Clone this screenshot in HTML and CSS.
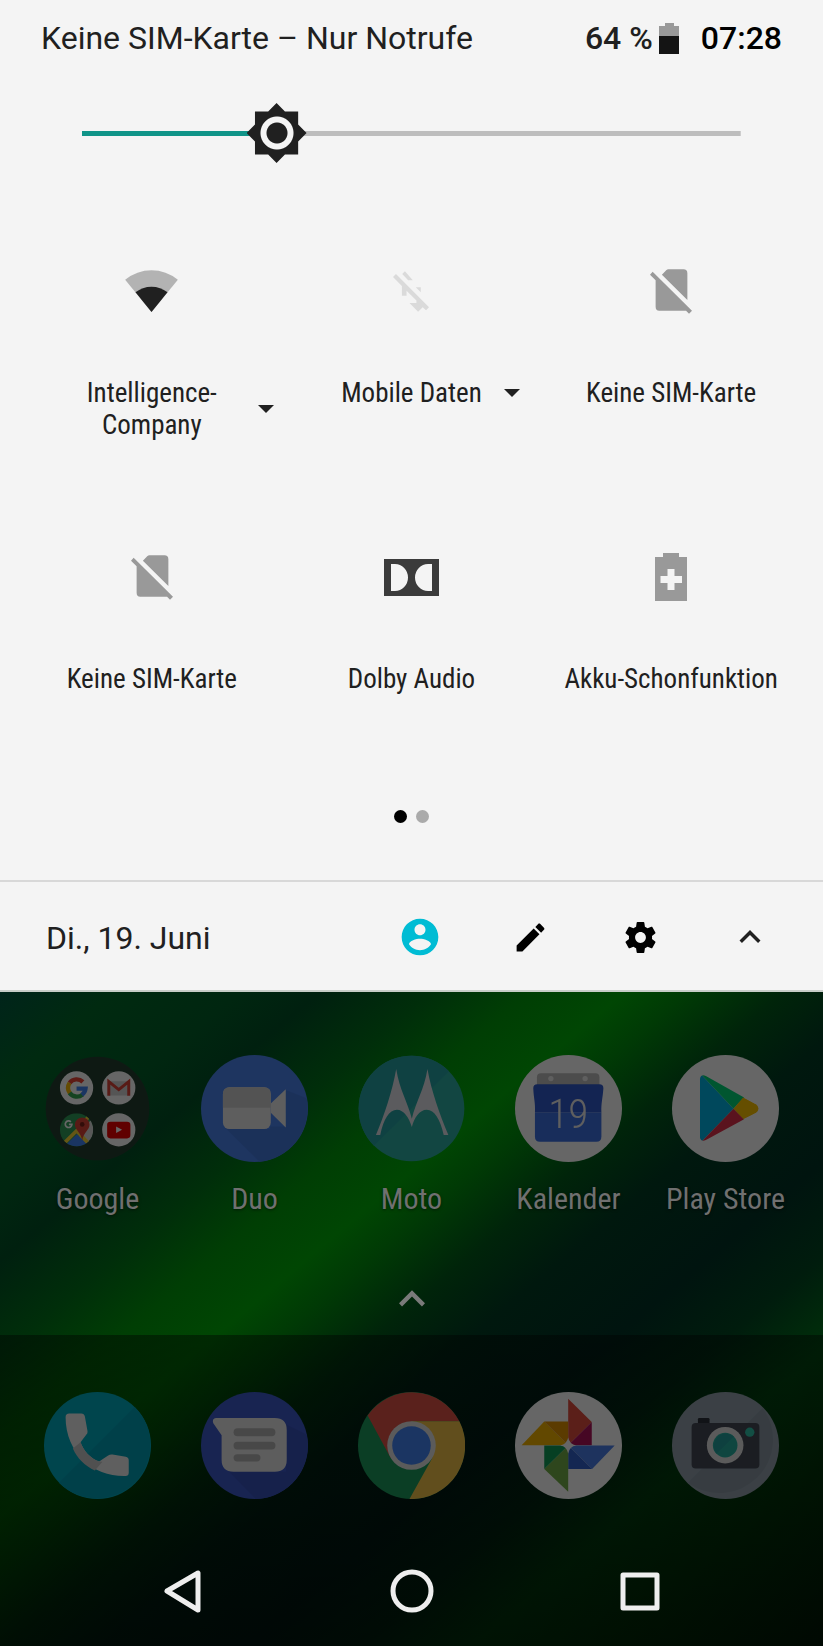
FILE: index.html
```html
<!DOCTYPE html>
<html lang="de">
<head>
  <meta charset="UTF-8">
  <meta name="viewport" content="width=device-width, initial-scale=1.0">
  <title>Schnelleinstellungen</title>
  <link rel="stylesheet" href="styles.css">
</head>
<body>

  <section class="panel">
    <header class="status">
      <span class="carrier">Keine SIM-Karte – Nur Notrufe</span>
      <span class="percent">64 %</span>
      <svg class="battery" viewBox="0 0 20 31"><path fill="#999" d="M6 0h9v3h5v10H0V3h6z"/><path fill="#141414" d="M0 13h20v18H0z"/></svg>
      <span class="clock">07:28</span>
    </header>

    <div class="brightness">
      <input type="range" min="0" max="255" value="70" aria-label="Helligkeit">
    </div>

    <div class="tiles">
      <button class="tile">
        <span class="tile-icon">
          <svg width="53" height="42" viewBox="0 0 158 126"><path fill="#b3b3b3" d="M79 126 0 29A125 125 0 0 1 158 29Z"/><path fill="#202020" d="M79 126 31 67A77 77 0 0 1 127 67Z"/></svg>
        </span>
        <span class="tile-label with-arrow"><span>Intelligence-Company</span><i class="arrow"></i></span>
      </button>
      <button class="tile">
        <span class="tile-icon">
          <svg width="36" height="41" viewBox="0 0 109 122"><path fill="#dadada" d="M9 8 0 17 27 44V74H41V59L71 88V96H50L76 122 90 109 100 118 109 109ZM36 0 28 8 46 27H60ZM69 48H84V63Z"/></svg>
        </span>
        <span class="tile-label with-arrow"><span>Mobile Daten</span><i class="arrow"></i></span>
      </button>
      <button class="tile">
        <span class="tile-icon">
          <svg width="42" height="45" viewBox="0 0 127 134"><path fill="#999" d="M8 7 0 16 17 33V113Q17 125 28 125H109L118 134 127 125ZM36 16 49 3Q52 0 56 0H101Q113 0 113 12V93Z"/></svg>
        </span>
        <span class="tile-label">Keine SIM-Karte</span>
      </button>
      <button class="tile">
        <span class="tile-icon">
          <svg width="42" height="45" viewBox="0 0 127 134"><path fill="#999" d="M8 7 0 16 17 33V113Q17 125 28 125H109L118 134 127 125ZM36 16 49 3Q52 0 56 0H101Q113 0 113 12V93Z"/></svg>
        </span>
        <span class="tile-label">Keine SIM-Karte</span>
      </button>
      <button class="tile">
        <span class="tile-icon">
          <svg width="55" height="37" viewBox="0 0 55 37"><path fill="#3b3b3b" d="M0 0h55v37H0z"/><path fill="#f4f4f4" d="M7 5h4a13 13.500 0 0 1 0 27H7zM48 5h-4a13 13.500 0 0 0 0 27h4z"/></svg>
        </span>
        <span class="tile-label">Dolby Audio</span>
      </button>
      <button class="tile">
        <span class="tile-icon">
          <svg width="32" height="48" viewBox="0 0 32 48"><path fill="#999" d="M8 0h16v4h8v44H0V4h8z"/><path fill="#f4f4f4" d="M12.500 16h7v7H27v7h-7.500v7h-7v-7H5.500v-7h7z"/></svg>
        </span>
        <span class="tile-label">Akku-Schonfunktion</span>
      </button>
    </div>

    <div class="pages"><i class="dot active"></i><i class="dot"></i></div>

    <footer class="panel-footer">
      <span class="date">Di., 19. Juni</span>
      <button aria-label="Nutzer"><svg width="44" height="44" viewBox="0 0 24 24"><path fill="#00bcd4" d="M12 2C6.480 2 2 6.480 2 12s4.480 10 10 10 10-4.480 10-10S17.520 2 12 2zm0 3c1.660 0 3 1.340 3 3s-1.340 3-3 3-3-1.340-3-3 1.340-3 3-3zm0 14.200c-2.500 0-4.710-1.280-6-3.220.030-1.990 4-3.080 6-3.080 1.990 0 5.970 1.090 6 3.080-1.290 1.940-3.500 3.220-6 3.220z"/></svg></button>
      <button aria-label="Bearbeiten"><svg width="37" height="37" viewBox="0 0 24 24"><path d="M3 17.250V21h3.750L17.810 9.940l-3.750-3.750L3 17.250zM20.710 7.040c.390-.390.390-1.020 0-1.410l-2.340-2.340c-.390-.390-1.020-.390-1.410 0l-1.830 1.830 3.750 3.750 1.830-1.830z"/></svg></button>
      <button aria-label="Einstellungen"><svg width="37" height="37" viewBox="0 0 24 24"><path d="M19.430 12.980c.040-.320.070-.640.070-.980s-.030-.660-.070-.980l2.110-1.650c.190-.150.240-.420.120-.640l-2-3.460c-.120-.220-.390-.300-.610-.220l-2.490 1c-.520-.400-1.080-.730-1.690-.980l-.380-2.650C14.460 2.180 14.250 2 14 2h-4c-.250 0-.460.180-.490.420l-.380 2.650c-.610.250-1.170.590-1.690.980l-2.490-1c-.230-.090-.490 0-.610.220l-2 3.460c-.130.220-.070.490.120.640l2.110 1.650c-.040.320-.070.650-.070.980s.030.660.070.980l-2.110 1.650c-.190.150-.240.420-.120.640l2 3.460c.120.220.390.300.610.220l2.490-1c.520.400 1.080.730 1.690.980l.380 2.650c.030.240.240.420.490.420h4c.250 0 .460-.180.490-.420l.380-2.650c.610-.250 1.170-.590 1.690-.980l2.490 1c.230.090.490 0 .610-.220l2-3.460c.120-.220.070-.490-.120-.640l-2.110-1.650zM12 15.500c-1.930 0-3.500-1.570-3.500-3.500s1.570-3.500 3.500-3.500 3.500 1.570 3.500 3.500-1.570 3.500-3.500 3.500z"/></svg></button>
      <button aria-label="Einklappen"><svg width="42" height="42" viewBox="0 0 24 24"><path fill="#202020" d="M12 8l-6 6 1.410 1.410L12 10.830l4.590 4.580L18 14z"/></svg></button>
    </footer>
  </section>

  <main class="home">
    <div class="apps">
      <a href="#" class="app">
        <svg viewBox="0 0 322 322">
          <circle cx="161" cy="161" r="156" fill="#243f30"/>
          <circle cx="98" cy="99" r="50" fill="#fff"/>
          <g fill="none" stroke-width="13">
            <path stroke="#ea4335" d="M77 84A27 27 0 0 1 117 81"/>
            <path stroke="#fbbc05" d="M78 115A27 27 0 0 1 77 84"/>
            <path stroke="#34a853" d="M116 119A27 27 0 0 1 77 114"/>
            <path stroke="#4285f4" d="M98 101H125A27 27 0 0 1 114 120"/>
          </g>
          <circle cx="225" cy="99" r="50" fill="#fff"/>
          <path fill="#d5d5d5" d="M196 79H254V122H196z"/>
          <path fill="none" stroke="#db4437" stroke-width="9" d="M195 123V80L225 104 255 80V123"/>
          <clipPath id="maps"><circle cx="98" cy="225" r="50"/></clipPath>
          <g clip-path="url(#maps)">
            <path fill="#2f9e5a" d="M48 175H148V275H48z"/>
            <path fill="#4285f4" d="M60 275 100 238 138 275z"/>
            <path fill="#ddd" d="M106 228 148 190V275H138L106 244z"/>
            <path stroke="#fdd835" stroke-width="11" fill="none" d="M54 272 98 228 138 270M118 208 140 176"/>
            <path fill="none" stroke="#fff" stroke-width="5" d="M81 201A10 10 0 1 0 84 209H75"/>
            <path fill="#db4437" d="M115 257C111 233 93 225 93 210A22 22 0 0 1 137 210C137 225 119 233 115 257Z"/>
            <circle cx="115" cy="209" r="7" fill="#7b2119"/>
          </g>
          <circle cx="225" cy="225" r="50" fill="#fff"/>
          <rect x="190" y="201" width="70" height="50" rx="10" fill="#f00000"/>
          <path fill="#fff" d="M217 215V235L235 225z"/>
        </svg>
        <span>Google</span>
      </a>
      <a href="#" class="app">
        <svg viewBox="0 0 322 322">
          <circle cx="161" cy="161" r="161" fill="#4a84f0"/>
          <path fill="#447adf" d="M72 218 176 321A161 161 0 0 0 318 130L255 105V215H208V223z"/>
          <path fill="#ececec" d="M210 146 255 103V218L210 174z"/>
          <rect x="66" y="97" width="144" height="126" rx="20" fill="#ececec"/>
          <path fill="#d0d0d0" d="M66 159V117Q66 97 86 97H190Q210 97 210 117V159z"/>
        </svg>
        <span>Duo</span>
      </a>
      <a href="#" class="app">
        <svg viewBox="0 0 322 322">
          <circle cx="161" cy="161" r="159" fill="#2cb0a4"/>
          <path fill="#26a3a5" d="M48 273A159 159 0 0 1 274 49z"/>
          <path fill="#e4e4ea" d="M54 241C80 178 103 110 115 42 125 105 149 140 162 192 174 140 199 105 209 42 221 110 246 178 272 241L258 241C247 193 230 165 207 165 185 165 169 190 162 217 154 190 138 165 117 165 94 165 77 193 67 241Z"/>
        </svg>
        <span>Moto</span>
      </a>
      <a href="#" class="app">
        <svg viewBox="0 0 322 322">
          <circle cx="161" cy="161" r="161" fill="#fff"/>
          <rect x="66" y="55" width="188" height="50" rx="12" fill="#bdbdbd"/>
          <circle cx="108" cy="71" r="8" fill="#eee"/><circle cx="211" cy="71" r="8" fill="#eee"/>
          <path fill="#3c70e4" d="M60 172H260V245Q260 261 245 261H75Q60 261 60 245z"/>
          <path fill="#3059cc" d="M55 100Q55 88 67 88H254Q266 88 266 100C264 130 259 145 260 172H60C62 145 56 130 55 100z"/>
          <text class="day" x="160" y="219" text-anchor="middle">19</text>
        </svg>
        <span>Kalender</span>
      </a>
      <a href="#" class="app">
        <svg viewBox="0 0 322 322">
          <circle cx="161" cy="161" r="161" fill="#fff"/>
          <clipPath id="play"><path d="M84 73Q86 56 102 63L253 148Q268 161 253 174L102 256Q86 263 84 247Z"/></clipPath>
          <g clip-path="url(#play)">
            <path fill="#00b4e6" d="M80 50V270L185 162z"/>
            <path fill="#00d878" d="M80 50 220 124 185 162z"/>
            <path fill="#fcc400" d="M214 128 280 162 214 193 185 162z"/>
            <path fill="#e0304a" d="M80 270 185 162 220 198z"/>
          </g>
        </svg>
        <span>Play Store</span>
      </a>
    </div>

    <div class="drawer"><svg width="52" height="52" viewBox="0 0 24 24"><path fill="#7a7a7a" d="M12 8l-6 6 1.410 1.410L12 10.830l4.590 4.580L18 14z"/></svg></div>

    <div class="dock">
      <div class="apps">
        <a href="#" class="app" aria-label="Telefon">
          <svg viewBox="0 0 322 322">
            <circle cx="161" cy="161" r="161" fill="#00acc1"/>
            <path fill="#00a1b6" d="M45 273 273 45A161 161 0 0 1 45 273z"/>
            <path fill="#eee" d="M65 76Q65 65 76 65H112Q121 65 123 74L131 118Q132 124 127 129L110 151C118 175 140 201 166 209L193 191Q199 187 206 188L246 195Q255 197 255 206V243Q255 253 245 253C150 255 65 185 65 76Z"/>
            <path fill="#c8c8c8" d="M87 170 110 151C118 175 140 201 166 209L176 210 153 236C124 223 100 200 87 170z"/>
          </svg>
        </a>
        <a href="#" class="app" aria-label="Nachrichten">
          <svg viewBox="0 0 322 322">
            <circle cx="161" cy="161" r="161" fill="#3c59ca"/>
            <path fill="#3752bc" d="M75 230 165 322A161 161 0 0 0 318 128L256 98V240z"/>
            <path fill="#e8e8e8" d="M46 78H222Q258 78 258 114V204Q258 240 222 240H98Q62 240 62 204V130L37 94Q32 79 46 78Z"/>
            <g fill="#b4b4b4"><rect x="98" y="109" width="126" height="24" rx="12"/><rect x="98" y="150" width="126" height="23" rx="11"/><rect x="98" y="187" width="81" height="22" rx="11"/></g>
          </svg>
        </a>
        <a href="#" class="app" aria-label="Chrome">
          <svg viewBox="0 0 322 322">
            <circle cx="161" cy="161" r="161" fill="#1b9c5c"/>
            <path fill="#e05247" d="M29 71A161 161 0 0 1 305 88H161V161L98 198z"/>
            <path fill="#f3c448" d="M305 88A161 161 0 0 1 155 322L224 198 161 161V88z"/>
            <circle cx="161" cy="161" r="73" fill="#e4e4e4"/><circle cx="161" cy="161" r="58" fill="#4485f4"/>
          </svg>
        </a>
        <a href="#" class="app" aria-label="Fotos">
          <svg viewBox="0 0 322 322">
            <circle cx="161" cy="161" r="161" fill="#fff"/>
            <path fill="#e34d3f" d="M160 20 231 90 160 160z"/><path fill="#b0125a" d="M231 90V160H160z"/>
            <path fill="#f4b400" d="M20 160 88 89 160 160z"/><path fill="#e39300" d="M88 89H160V160z"/>
            <path fill="#4a80ea" d="M300 161 232 232 160 161z"/><path fill="#3262cc" d="M160 161 232 232H160z"/>
            <path fill="#72b048" d="M160 300 88 232 160 161z"/><path fill="#0f9d58" d="M88 161H160L88 232z"/>
            <path fill="#fff" d="M160 137Q164 157 184 161 164 164 160 185 156 164 136 161 156 157 160 137z"/>
          </svg>
        </a>
        <a href="#" class="app" aria-label="Kamera">
          <svg viewBox="0 0 322 322">
            <circle cx="161" cy="161" r="161" fill="#93a1ad"/>
            <path fill="#8997a3" d="M48 273 273 48A161 161 0 0 1 48 273z"/>
            <rect x="78" y="78" width="35" height="24" rx="4" fill="#2b3039"/>
            <rect x="59" y="93" width="204" height="137" rx="12" fill="#434956"/>
            <circle cx="160" cy="160" r="55" fill="#e4e4e4"/><circle cx="160" cy="160" r="37" fill="#26b0a0"/>
            <path fill="#229f9d" d="M134 186A37 37 0 0 1 186 134z"/>
            <circle cx="234" cy="121" r="14" fill="#2fc4aa"/>
          </svg>
        </a>
      </div>

      <nav class="nav">
        <button aria-label="Zurück"><svg width="44" height="44" viewBox="0 0 44 44"><path d="M36 4V41L5 22z"/></svg></button>
        <button aria-label="Startbildschirm"><svg width="44" height="44" viewBox="0 0 44 44"><circle cx="22" cy="22" r="19"/></svg></button>
        <button aria-label="Übersicht"><svg width="44" height="44" viewBox="0 0 44 44"><path d="M5 6H39V39H5z"/></svg></button>
      </nav>
    </div>
  </main>

</body>
</html>
```
FILE: styles.css
```css
* {
  box-sizing: border-box;
}
body {
  margin: 0;
  min-height: 100vh;
  display: flex;
  flex-direction: column;
  font-family: Roboto, sans-serif;
  color: #202020;
  background: #000;
}
button {
  border: 0;
  padding: 0;
  background: none;
  color: inherit;
  font: inherit;
}
svg {
  display: block;
}

/* quick settings panel */
.panel {
  background: #f4f4f4;
  border-bottom: 2px solid #c8cdc8;
}
.status {
  display: flex;
  align-items: center;
  height: 76px;
  padding: 0 41px;
  font-size: 32px;
  line-height: 38px;
}
.carrier {
  flex: 1;
}
.percent, .clock {
  font-weight: 500;
}
.clock {
  color: #000;
}
.battery {
  width: 20px;
  height: 31px;
  margin: 0 22px 0 6px;
}
.brightness {
  margin: 27px 10% 0;
}
.brightness input {
  -webkit-appearance: none;
  appearance: none;
  display: block;
  width: 100%;
  height: 60px;
  margin: 0;
  background: linear-gradient(90deg, #109488 29%, #bdbdbd 29%) center / 100% 5px no-repeat;
}
.brightness input::-webkit-slider-thumb {
  -webkit-appearance: none;
  width: 60px;
  height: 60px;
  background: radial-gradient(circle, #202020 10px, #f4f4f4 11px, #f4f4f4 16px, #202020 17px);
  clip-path: polygon(50% 0, 64% 14%, 86% 14%, 86% 36%, 100% 50%, 86% 64%, 86% 86%, 64% 86%, 50% 100%, 36% 86%, 14% 86%, 14% 64%, 0 50%, 14% 36%, 14% 14%, 36% 14%);
}
.tiles {
  display: grid;
  grid-template-columns: repeat(3, 1fr);
  grid-auto-rows: 286px;
  margin-top: 98px;
  padding: 0 22px;
}
.tile {
  display: flex;
  flex-direction: column;
  align-items: center;
  min-width: 0;
  padding: 0 8px;
  font-family: "Roboto Condensed", "Liberation Sans Narrow", Roboto, sans-serif;
  font-size: 27px;
  line-height: 32px;
}
.tile-icon {
  display: flex;
  align-items: center;
  justify-content: center;
  height: 60px;
  margin-bottom: 56px;
}
.tile-label {
  white-space: nowrap;
}
.with-arrow {
  display: flex;
  align-items: center;
  padding-left: 38px;
  white-space: normal;
}
.arrow {
  flex: none;
  margin-left: 22px;
  border: 8px solid transparent;
  border-top-color: #202020;
  border-bottom: 0;
}
.pages {
  display: flex;
  justify-content: center;
  gap: 9px;
  margin-top: -23px;
  padding-bottom: 57px;
}
.dot {
  width: 13px;
  height: 13px;
  border-radius: 50%;
  background: #aaa;
}
.dot.active {
  background: #000;
}
.panel-footer {
  display: flex;
  align-items: center;
  height: 110px;
  padding: 2px 18px 0 46px;
  border-top: 2px solid #d8d8d8;
}
.date {
  flex: 1;
  font-size: 32px;
  line-height: 38px;
  padding-top: 2px;
}
.panel-footer button {
  display: flex;
  justify-content: center;
  width: 110px;
}

/* dimmed home screen */
.home {
  flex: 1;
  display: flex;
  flex-direction: column;
  background: linear-gradient(140deg, #00241a 0%, #002a10 7%, #002610 15%, #00200f 20%, #002e0a 27%, #003e04 33%, #004603 39%, #003a05 43%, #00240a 49%, #00180e 55%, #00140f 64%, #001c0d 71%, #00300a 78%, #002806 86%, #001605 100%);
}
.apps {
  display: grid;
  grid-template-columns: repeat(5, 1fr);
  padding: 0 19px;
}
.app {
  display: flex;
  flex-direction: column;
  align-items: center;
  color: #707070;
  text-decoration: none;
  font-family: "Roboto Condensed", "Liberation Sans Narrow", Roboto, sans-serif;
  font-size: 30px;
  line-height: 36px;
  text-shadow: 0 1px 3px rgba(0, 0, 0, .5);
  white-space: nowrap;
}
.app svg {
  width: 107px;
  height: 107px;
  filter: brightness(.4);
}
.app span {
  margin-top: 19px;
}
.home > .apps {
  padding-top: 63px;
}
.day {
  font: 300 124px "Roboto Condensed", Roboto, sans-serif;
  fill: #eee;
  text-shadow: none;
}
.drawer {
  display: flex;
  justify-content: center;
  margin: 56px 0 10px;
}
.dock {
  flex: 1;
  padding-top: 57px;
  background: linear-gradient(rgba(0, 0, 0, .42), rgba(0, 0, 0, .62));
}
.nav {
  display: flex;
  justify-content: center;
  padding: 70px 0 32px;
}
.nav button {
  display: flex;
  justify-content: center;
  width: 228px;
}
.nav svg {
  fill: none;
  stroke: #eee;
  stroke-width: 5;
  stroke-linejoin: round;
}
```
